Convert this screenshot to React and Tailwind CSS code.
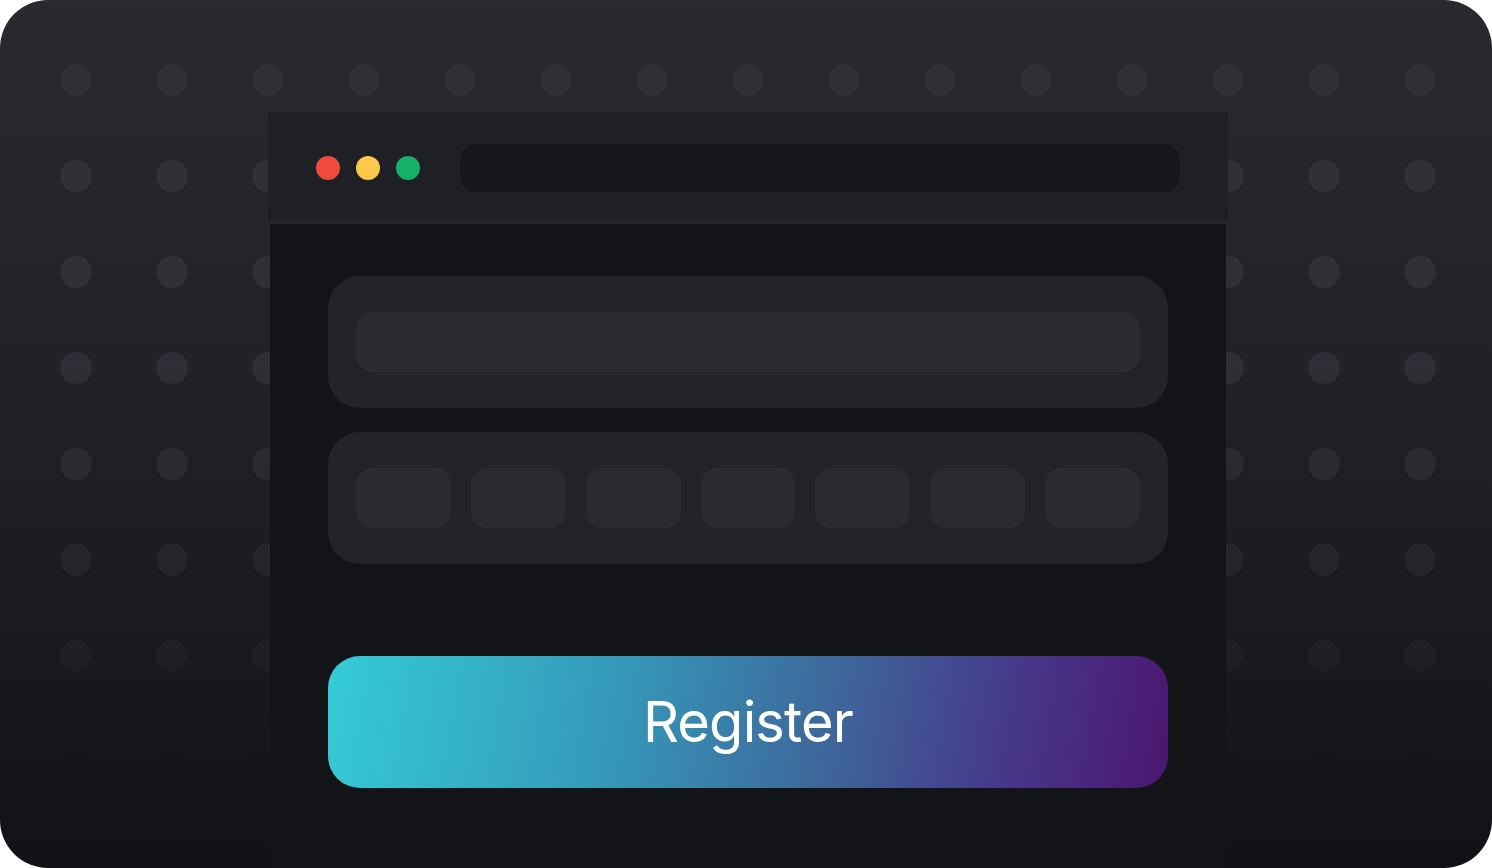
import React from 'react';

const lights = ['bg-[#f04a3e]', 'bg-[#fec84b]', 'bg-[#17b26a]'];
const chips = [1, 2, 3, 4, 5, 6, 7];

const App = () => {
  return (
    <div className="w-[1492px] h-[868px] bg-white">
      <div className="relative h-full overflow-hidden rounded-[48px] bg-gradient-to-b from-[#292a30] via-[#202126] to-[#111216]">
        {/* dotted backdrop */}
        <div className="absolute inset-0 bg-[radial-gradient(circle,#303137_15.5px,transparent_16.5px)] bg-[length:96px_96px] bg-[position:28px_32px] [mask-image:linear-gradient(to_bottom,black_0%,black_36%,transparent_88%)]" />

        <div className="relative ml-[268px] flex h-full w-[960px] flex-col items-center pt-[112px]">
          {/* browser header */}
          <div className="flex h-[108px] w-[960px] shrink-0 items-center gap-4 bg-[#1f2025] px-12 pt-1">
            {lights.map((c) => (
              <span key={c} className={`h-6 w-6 rounded-full ${c}`} />
            ))}
            <div className="ml-6 h-12 flex-1 rounded-2xl bg-[#16171b]" />
          </div>

          {/* browser body */}
          <div className="mt-1 flex w-[956px] flex-1 flex-col bg-[#131418] px-[58px] pt-[52px]">
            <div className="rounded-[32px] bg-[#232429] px-7 py-9">
              <div className="h-[60px] rounded-2xl bg-[#2a2b30]" />
            </div>

            <div className="mt-6 flex gap-5 rounded-[32px] bg-[#232429] px-7 py-9">
              {chips.map((i) => (
                <div key={i} className="h-[60px] flex-1 rounded-2xl bg-[#2a2b30]" />
              ))}
            </div>

            <button className="mt-[92px] flex h-[132px] items-center justify-center rounded-[32px] bg-[linear-gradient(100deg,#34cbd7_0%,#3597b8_35%,#3d6a9c_58%,#46398a_80%,#4b166e_100%)] font-['Inter',sans-serif] text-[56px] font-normal tracking-[-0.015em] text-white">
              Register
            </button>
          </div>
        </div>
      </div>
    </div>
  );
};

export default App;
